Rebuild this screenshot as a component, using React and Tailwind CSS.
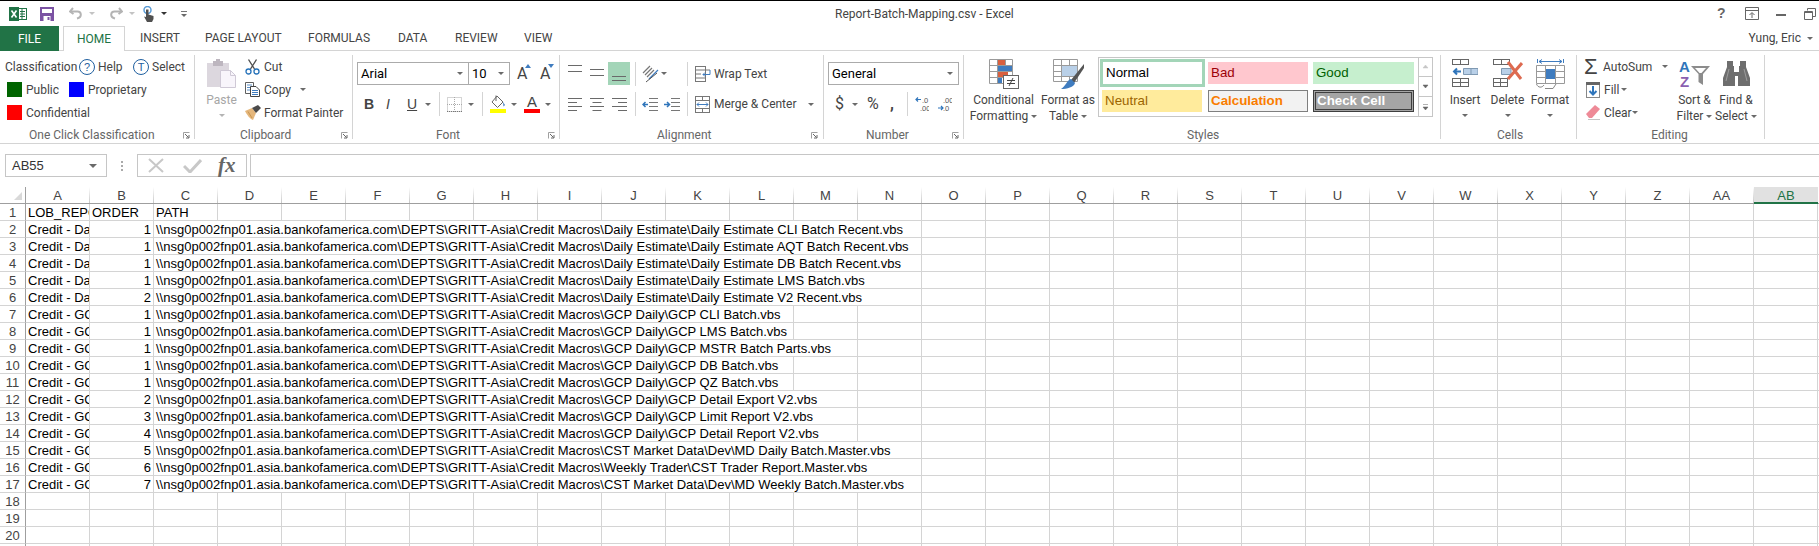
import React from 'react';

const UI = "font-['Roboto','Liberation_Sans',sans-serif]";
const ARIAL = "font-['Liberation_Sans',Arial,sans-serif]";

const COLS = 'A B C D E F G H I J K L M N O P Q R S T U V W X Y Z AA AB'.split(' ');
const BASE = '\\\\nsg0p002fnp01.asia.bankofamerica.com\\DEPTS\\GRITT-Asia\\Credit Macros\\';
const EST = 'Daily Estimate\\Daily Estimate ';
const GCP = 'GCP Daily\\GCP ';

// span = how many columns the path text runs over (gridlines are hidden below it)
const ROWS = [
  { a: 'Credit - Daily', o: 1, p: EST + 'CLI Batch Recent.vbs', span: 12 },
  { a: 'Credit - Daily', o: 1, p: EST + 'AQT Batch Recent.vbs', span: 12 },
  { a: 'Credit - Daily', o: 1, p: EST + 'DB Batch Recent.vbs', span: 12 },
  { a: 'Credit - Daily', o: 1, p: EST + 'LMS Batch.vbs', span: 12 },
  { a: 'Credit - Daily', o: 2, p: EST + 'V2 Recent.vbs', span: 12 },
  { a: 'Credit - GCP', o: 1, p: GCP + 'CLI Batch.vbs', span: 10 },
  { a: 'Credit - GCP', o: 1, p: GCP + 'LMS Batch.vbs', span: 10 },
  { a: 'Credit - GCP', o: 1, p: GCP + 'MSTR Batch Parts.vbs', span: 11 },
  { a: 'Credit - GCP', o: 1, p: GCP + 'DB Batch.vbs', span: 10 },
  { a: 'Credit - GCP', o: 1, p: GCP + 'QZ Batch.vbs', span: 10 },
  { a: 'Credit - GCP', o: 2, p: GCP + 'Detail Export V2.vbs', span: 11 },
  { a: 'Credit - GCP', o: 3, p: GCP + 'Limit Report V2.vbs', span: 11 },
  { a: 'Credit - GCP', o: 4, p: GCP + 'Detail Report V2.vbs', span: 11 },
  { a: 'Credit - GCP', o: 5, p: 'CST Market Data\\Dev\\MD Daily Batch.Master.vbs', span: 12 },
  { a: 'Credit - GCP', o: 6, p: 'Weekly Trader\\CST Trader Report.Master.vbs', span: 12 },
  { a: 'Credit - GCP', o: 7, p: 'CST Market Data\\Dev\\MD Weekly Batch.Master.vbs', span: 12 },
];

const SPAN_W = { 1: 'w-[64px]', 10: 'w-[640px]', 11: 'w-[704px]', 12: 'w-[768px]' };

const Caret = ({ className = '' }) => (
  <span className={`block w-0 h-0 shrink-0 border-x-[3px] border-t-[3px] border-x-transparent border-t-[#6a6a6a] ${className}`} />
);

const Launcher = ({ className = '' }) => (
  <svg width="7" height="7" viewBox="0 0 7 7" className={`shrink-0 mt-[3px] ${className}`}>
    <path d="M0.5 6.5V0.5H6.5" fill="none" stroke="#a0a0a0" />
    <path d="M2 2L5.5 5.5M6 3V6H3" fill="none" stroke="#666" />
  </svg>
);

const Sep = ({ className = '' }) => <span className={`block w-px h-[24px] bg-[#d4d4d4] shrink-0 ${className}`} />;

function Group({ width, children, label, labelClass, launcherClass }) {
  return (
    <div className={`${width} h-[84px] border-r border-[#d4d4d4] shrink-0 flex flex-col`}>
      <div className="h-[74px]">{children}</div>
      <div className="h-[10px] flex items-start text-[12px] leading-[12px] text-[#666] whitespace-nowrap">
        <span className={`${labelClass} text-center shrink-0`}>{label}</span>
        {launcherClass && <Launcher className={launcherClass} />}
      </div>
    </div>
  );
}

const Line = ({ children, className = '' }) => (
  <div className={`flex items-center h-[23px] whitespace-nowrap ${className}`}>{children}</div>
);

function BigButton({ width, icon, lines, caretInline, className = '' }) {
  return (
    <div className={`${width} ${className} shrink-0 flex flex-col items-center pt-[4px] leading-[16px] whitespace-nowrap`}>
      <div className="h-[30px] flex items-start justify-center">{icon}</div>
      <div className="mt-[3px] h-[16px]">{lines[0]}</div>
      {caretInline ? (
        <div className="h-[16px] flex items-center gap-[3px]">{lines[1]}<Caret /></div>
      ) : (
        <Caret className="mt-[6px]" />
      )}
    </div>
  );
}

/* ---------- quick access icons ---------- */
const ExcelLogo = () => (
  <svg width="18" height="14" viewBox="0 0 18 14" className="shrink-0">
    <rect x="7.5" y="1.5" width="10" height="11" fill="#fff" stroke="#217346" />
    <path d="M11 4.5h5M11 7h5M11 9.500h5M13 2v10" stroke="#217346" />
    <rect x="0" y="0" width="10" height="14" fill="#217346" />
    <path d="M2.500 3.500L7.500 10.500M7.500 3.500L2.500 10.500" stroke="#fff" strokeWidth="1.600" />
  </svg>
);
const SaveIcon = () => (
  <svg width="14" height="14" viewBox="0 0 14 14" className="shrink-0">
    <rect width="14" height="14" fill="#7b52a3" />
    <rect x="2" y="2" width="10" height="4" fill="#fff" />
    <rect x="3.500" y="9" width="7" height="5" fill="#fff" />
    <rect x="7.500" y="10" width="2" height="3" fill="#7b52a3" />
  </svg>
);
const UndoIcon = ({ flip }) => (
  <svg width="14" height="13" viewBox="0 0 14 13" className={`shrink-0 ${flip ? '-scale-x-100' : ''}`}>
    <path d="M4 1L1 4.500L4.500 7" fill="none" stroke="#b4b4b4" strokeWidth="2" />
    <path d="M2 4.500H8.500C12.500 4.500 13.500 10 8 11.500" fill="none" stroke="#b4b4b4" strokeWidth="2" />
  </svg>
);
const TouchIcon = () => (
  <svg width="12" height="16" viewBox="0 0 12 16" className="shrink-0">
    <circle cx="4.500" cy="4" r="3.500" fill="none" stroke="#5a9bd5" strokeWidth="1.500" />
    <path d="M3 3.500h2.500v5l5 1.500V13l-1.500 3H4L1 10.500l2 .5z" fill="#505050" />
  </svg>
);
const Customize = () => (
  <span className="flex flex-col items-center gap-[2px] shrink-0">
    <span className="block w-[6px] h-px bg-[#777]" />
    <Caret />
  </span>
);

/* ---------- classification ---------- */
const Circled = ({ children }) => (
  <span className={`w-[16px] h-[16px] rounded-full border border-[#1f5f9f] text-[#1f5f9f] text-[11px] leading-[14px] text-center shrink-0 ${ARIAL}`}>
    {children}
  </span>
);

/* ---------- clipboard ---------- */
const PasteIcon = () => (
  <svg width="29" height="29" viewBox="0 0 29 29">
    <rect x="0" y="4" width="22" height="24" fill="#dcd7de" />
    <rect x="6" y="2" width="10" height="5" fill="#bdb6bf" />
    <rect x="9" y="0" width="4" height="4" fill="#bdb6bf" />
    <path d="M13.500 11.500H23.500L28.500 16.500V28.500H13.500Z" fill="#f8f5fb" stroke="#cfc9d6" />
    <path d="M23.500 11.500V16.500H28.500" fill="none" stroke="#cfc9d6" />
  </svg>
);
const CutIcon = () => (
  <svg width="15" height="16" viewBox="0 0 15 16" className="shrink-0">
    <path d="M3.500 0.500L9.500 10M11.500 0.500L5.500 10" stroke="#4f4f4f" strokeWidth="1.400" fill="none" />
    <circle cx="3.500" cy="12.500" r="2.500" fill="none" stroke="#2672b9" strokeWidth="1.300" />
    <circle cx="11.500" cy="12.500" r="2.500" fill="none" stroke="#2672b9" strokeWidth="1.300" />
  </svg>
);
const CopyIcon = () => (
  <svg width="15" height="15" viewBox="0 0 15 15" className="shrink-0">
    <path d="M0.500 0.500H8.500V11.500H0.500Z" fill="#fff" stroke="#5f5f5f" />
    <path d="M2 3h5M2 5.500h5M2 8h3" stroke="#5b8fc7" />
    <path d="M5.500 4.500H11L14.500 8V14.500H5.500Z" fill="#fff" stroke="#444" />
    <path d="M7 8.500h6M7 10.500h6M7 12.500h6" stroke="#3f7cbf" />
  </svg>
);
const PainterIcon = () => (
  <svg width="16" height="15" viewBox="0 0 16 15" className="shrink-0">
    <path d="M0 6L7 3L11 8L8 15C5 14 2 10 0 6Z" fill="#e5b77c" />
    <path d="M7 3L11 8L16 3L13 0Z" fill="#4a4a4a" />
    <path d="M3 6.500L7 13" stroke="#c89550" />
  </svg>
);

/* ---------- font ---------- */
const Combo = ({ width, text, className = '' }) => (
  <div className={`${width} ${className} h-[23px] border border-[#ababab] bg-white flex items-center justify-between pl-[3px] pr-[5px] text-[13px] text-black shrink-0`}>
    <span>{text}</span>
    <Caret />
  </div>
);
const GrowFont = ({ up, className = '' }) => (
  <span className={`relative w-[13px] h-[23px] flex items-center text-[16px] text-[#444] shrink-0 ${className}`}>
    A
    <svg width="6" height="4" viewBox="0 0 6 4" className="absolute -right-[1px] top-[2px]">
      <path d={up ? 'M0 4L3 0L6 4Z' : 'M0 0L6 0L3 4Z'} fill="#3f7cbf" />
    </svg>
  </span>
);
const BordersIcon = () => (
  <svg width="15" height="15" viewBox="0 0 15 15" className="shrink-0">
    <rect x="0.500" y="0.500" width="14" height="14" fill="none" stroke="#aaa" strokeDasharray="1 1" />
    <path d="M7.500 0v15M0 7.500h15" stroke="#aaa" strokeDasharray="1 1" />
    <path d="M0 14.500h15" stroke="#777" strokeDasharray="1 1" />
  </svg>
);
const FillIcon = () => (
  <svg width="16" height="18" viewBox="0 0 16 18" className="shrink-0">
    <path d="M7 1L13 7L7.500 12.500L2 7Z" fill="#fff" stroke="#666" />
    <path d="M6 0.500V6" stroke="#666" />
    <path d="M13 7L15 10L13.500 11.500Z" fill="#3f7cbf" />
    <rect x="0" y="14" width="16" height="4" fill="#ffff00" />
  </svg>
);
const FontColor = () => (
  <span className={`w-[16px] h-[18px] flex flex-col items-center shrink-0 ${ARIAL}`}>
    <span className="text-[15px] leading-[14px] text-[#444]">A</span>
    <span className="block w-[16px] h-[4px] bg-[#ff0000]" />
  </span>
);

/* ---------- alignment ---------- */
const Lines = ({ width = 14, height = 23, d, color = '#6a6a6a', className = '' }) => (
  <svg width={width} height={height} viewBox={`0 0 ${width} ${height}`} className={`shrink-0 ${className}`}>
    <path d={d} stroke={color} fill="none" />
  </svg>
);
const OrientIcon = () => (
  <svg width="18" height="18" viewBox="0 0 18 18" className="shrink-0">
    <path d="M1 8L8 1M3 10L10 3M5 12L12 5" stroke="#777" strokeWidth="1.200" />
    <path d="M7 14L16 5" stroke="#3f7cbf" strokeWidth="1.200" />
    <path d="M4 17L15 8" stroke="#555" />
  </svg>
);
const WrapIcon = () => (
  <svg width="16" height="16" viewBox="0 0 16 16" className="shrink-0">
    <rect x="0.500" y="0.500" width="10" height="15" fill="none" stroke="#777" />
    <path d="M1 4h14M1 8h5M1 12h9" stroke="#777" />
    <path d="M15 4v4.500H8M10 6.500L8 8.500L10 10.500" stroke="#3f7cbf" fill="none" />
  </svg>
);
const MergeIcon = () => (
  <svg width="15" height="17" viewBox="0 0 15 17" className="shrink-0">
    <rect x="0.500" y="0.500" width="14" height="16" fill="#fff" stroke="#777" />
    <path d="M0 4.500h15M0 12.500h15M7.500 0v4M7.500 13v4" stroke="#777" />
    <path d="M2 8.500h11M4 6.500L2 8.500L4 10.500M11 6.500L13 8.500L11 10.500" stroke="#3f7cbf" fill="none" />
  </svg>
);
const IndentIcon = ({ inc }) => (
  <svg width="16" height="13" viewBox="0 0 16 13" className="shrink-0">
    <path d="M7 0.500h9M7 4.500h9M7 8.500h9M7 12.500h9" stroke="#777" />
    <path d={inc ? 'M0 6.500H5M3 4L5.500 6.500L3 9' : 'M6 6.500H1M3.500 4L1 6.500L3.500 9'} stroke="#2f75bb" strokeWidth="1.500" fill="none" />
  </svg>
);
const DecimalIcon = ({ inc }) => (
  <svg width="14" height="16" viewBox="0 0 14 16" className={`shrink-0 ${ARIAL}`}>
    <text x={inc ? 7 : 5} y="6.500" fontSize="7.500" fill="#555">{inc ? '.0' : '.00'}</text>
    <text x="5" y="15" fontSize="7.500" fill="#555">{inc ? '.00' : '.0'}</text>
    <path d={inc ? 'M6 3.500H1M3 1.500L1 3.500L3 5.500' : 'M0 12H5M3 10L5 12L3 14'} stroke="#2f75bb" strokeWidth="1.200" fill="none" />
  </svg>
);

/* ---------- styles ---------- */
const CondIcon = () => (
  <svg width="30" height="30" viewBox="0 0 30 30">
    <path d="M0.500 0.500H23.500V24.500H0.500ZM0.500 6.500H23.500M0.500 12.500H23.500M0.500 18.500H23.500M8.500 0.500V24.500M16.500 0.500V24.500" fill="#fff" stroke="#9a9a9a" />
    <rect x="9" y="1" width="7" height="5" fill="#d9603f" />
    <rect x="9" y="7" width="14" height="5" fill="#3f7cbf" />
    <rect x="9" y="13" width="10" height="5" fill="#d9603f" />
    <rect x="9" y="19" width="4" height="5" fill="#3f7cbf" />
    <rect x="14.500" y="16.500" width="15" height="13" fill="#fff" stroke="#666" />
    <path d="M18 21.500h8M18 24.500h8M24 19L20 27" stroke="#444" />
  </svg>
);
const TableIcon = () => (
  <svg width="31" height="30" viewBox="0 0 31 30">
    <path d="M0.500 0.500H24.500V22.500H0.500ZM0.500 6.500H24.500M0.500 12.500H24.500M0.500 17.500H24.500M8.500 0.500V22.500M16.500 0.500V22.500" fill="#fff" stroke="#9a9a9a" />
    <rect x="9" y="7" width="15" height="10" fill="#b9d0e8" />
    <path d="M31 5L18 21L21 24L31 9Z" fill="#555" />
    <path d="M18 20C14 21 13 27 8 30C14 30 21 28 22 24Z" fill="#3f7cbf" />
  </svg>
);
const Scroll = ({ d, color, last }) => (
  <div className={`h-[20px] flex items-center justify-center ${last ? '' : 'border-b border-[#c6c6c6]'}`}>
    <svg width="7" height="9" viewBox="0 0 7 9"><path d={d} fill={color} stroke={color} strokeWidth="0.500" /></svg>
  </div>
);

/* ---------- cells ---------- */
const Grid3 = ({ x, y, w = 11, h = 8 }) => (
  <g fill="#fff" stroke="#666">
    <rect x={x + 0.5} y={y + 0.5} width={w} height={h} />
    <path d={`M${x + 0.5 + w / 2} ${y}v${h + 1}`} />
  </g>
);
const InsertIcon = () => (
  <svg width="26" height="28" viewBox="0 0 26 28">
    <Grid3 x={0} y={0} w={16} h={5} />
    <path d="M11.500 9.500H26V15.500H11.500Z" fill="#b9d0e8" stroke="#7f99b2" />
    <path d="M19 9v7" stroke="#7f99b2" />
    <path d="M9 12.500H2M5 9.500L2 12.500L5 15.500" stroke="#2f75bb" strokeWidth="2" fill="none" />
    <rect x="0.500" y="19.500" width="16" height="8" fill="#fff" stroke="#666" />
    <path d="M8.500 19v9M0 23.500h17" stroke="#666" />
  </svg>
);
const DeleteIcon = () => (
  <svg width="30" height="28" viewBox="0 0 30 28">
    <Grid3 x={0} y={0} w={16} h={5} />
    <path d="M8.500 9.500H18V15.500H8.500Z" fill="#b9d0e8" stroke="#7f99b2" />
    <rect x="0.500" y="19.500" width="14" height="8" fill="#fff" stroke="#666" />
    <path d="M7.500 19v9M0 23.500h15" stroke="#666" />
    <path d="M15 3L28 20M29 4L15 20" stroke="#dd6a50" strokeWidth="3" />
  </svg>
);
const FormatIcon = () => (
  <svg width="29" height="30" viewBox="0 0 29 30">
    <path d="M1.500 0v4M27.500 0v4M3 2.500H26M6 0.500L3 2.500L6 4.500M23 0.500L26 2.500L23 4.500" stroke="#3f7cbf" fill="none" />
    <path d="M0.500 6.500H28.500V24.500H0.500ZM0.500 12.500H28.500M0.500 18.500H28.500M9.500 6.500V24.500M19.500 6.500V24.500" fill="#fff" stroke="#999" />
    <rect x="10" y="10" width="9" height="10" fill="#3f7cbf" />
    <path d="M0.500 25C2 29 6 29 8 26M9 29.500H17L20 25" fill="none" stroke="#888" />
  </svg>
);

/* ---------- editing ---------- */
const FillDown = () => (
  <svg width="14" height="16" viewBox="0 0 14 16" className="shrink-0">
    <rect x="0.500" y="0.500" width="13" height="15" fill="#fff" stroke="#888" />
    <rect x="0" y="0" width="14" height="3" fill="#666" />
    <path d="M7 4V12M3.500 9L7 12.500L10.500 9" stroke="#2f75bb" strokeWidth="2" fill="none" />
  </svg>
);
const ClearIcon = () => (
  <svg width="14" height="15" viewBox="0 0 14 15" className="shrink-0">
    <path d="M0 9L9 0L14 4L6 13H3Z" fill="#ee8a97" />
    <path d="M2 15H14" stroke="#888" />
  </svg>
);
const SortIcon = () => (
  <svg width="31" height="30" viewBox="0 0 31 30" className={ARIAL}>
    <text x="0" y="13" fontSize="15" fontWeight="700" fill="#2f75bb">A</text>
    <text x="1" y="28" fontSize="15" fontWeight="700" fill="#8a5fb0">Z</text>
    <path d="M12 7H31L24 15V26L19.500 23V15Z" fill="#8c8c8c" />
    <path d="M16 9H27L22.500 14H20.500Z" fill="#fff" />
  </svg>
);
const FindIcon = () => (
  <svg width="27" height="30" viewBox="0 0 27 30">
    <path d="M4 2H10V7H11V13H16V7H17V2H23V8L27 19V27H15V17H12V27H0V19L4 8Z" fill="#6e6e6e" />
    <path d="M6 10L3 22M21 10L24 22" stroke="#9c9c9c" />
  </svg>
);

function Ribbon() {
  return (
    <div className={`flex h-[93px] pt-[4px] border-b border-[#d4d4d4] text-[12px] text-[#444] ${UI}`}>
      <Group width="w-[195px]" label="One Click Classification" labelClass="ml-[29px] w-[120px]" launcherClass="ml-[34px]">
        <Line>
          <span className="ml-[5px] w-[74px]">Classification</span>
          <Circled>?</Circled>
          <span className="ml-[3px] w-[35px]">Help</span>
          <Circled>T</Circled>
          <span className="ml-[3px]">Select</span>
        </Line>
        <Line>
          <span className="ml-[7px] w-[15px] h-[15px] bg-[#006400] shrink-0" />
          <span className="ml-[4px] w-[43px]">Public</span>
          <span className="w-[15px] h-[15px] bg-[#0000ff] shrink-0" />
          <span className="ml-[4px]">Proprietary</span>
        </Line>
        <Line>
          <span className="ml-[7px] w-[15px] h-[15px] bg-[#ff0000] shrink-0" />
          <span className="ml-[4px]">Confidential</span>
        </Line>
      </Group>

      <Group width="w-[158px]" label="Clipboard" labelClass="ml-[45px] w-[50px]" launcherClass="ml-[51px]">
        <div className="flex">
          <div className="ml-[12px] w-[29px] flex flex-col items-center pt-[4px] text-[#a6a6a6] leading-[16px]">
            <PasteIcon />
            <span className="mt-[4px]">Paste</span>
            <Caret className="mt-[6px] opacity-50" />
          </div>
          <div className="ml-[9px]">
            <Line><CutIcon /><span className="ml-[4px]">Cut</span></Line>
            <Line><CopyIcon /><span className="ml-[4px] w-[36px]">Copy</span><Caret /></Line>
            <Line><PainterIcon /><span className="ml-[3px]">Format Painter</span></Line>
          </div>
        </div>
      </Group>

      <Group width="w-[207px]" label="Font" labelClass="ml-[83px] w-[24px]" launcherClass="ml-[88px]">
        <div className="pt-[7px] flex items-center">
          <Combo width="w-[112px]" text="Arial" className="ml-[4px]" />
          <Combo width="w-[42px]" text="10" className="-ml-px" />
          <GrowFont up className="ml-[7px]" />
          <GrowFont className="ml-[10px]" />
        </div>
        <div className={`mt-[7px] h-[24px] flex items-center text-[14px] ${ARIAL}`}>
          <span className="ml-[11px] w-[8px] font-bold">B</span>
          <span className="ml-[14px] w-[6px] italic">I</span>
          <span className="ml-[15px] w-[9px] underline">U</span>
          <Caret className="ml-[9px]" />
          <Sep className="ml-[8px]" />
          <span className="ml-[7px]"><BordersIcon /></span>
          <Caret className="ml-[6px]" />
          <Sep className="ml-[8px]" />
          <span className="ml-[7px]"><FillIcon /></span>
          <Caret className="ml-[5px]" />
          <span className="ml-[7px]"><FontColor /></span>
          <Caret className="ml-[5px]" />
        </div>
      </Group>

      <Group width="w-[264px]" label="Alignment" labelClass="ml-[97px] w-[53px]" launcherClass="ml-[101px]">
        <div className="pt-[7px] flex items-center h-[30px]">
          <Lines className="ml-[8px]" d="M0 3.500h14M0 9.500h14" />
          <Lines className="ml-[8px]" d="M0 7.500h14M0 13.500h14" />
          <span className="ml-[4px] w-[22px] h-[23px] bg-[#a3d5b8] flex justify-center">
            <Lines d="M0 14.500h14M0 18.500h14" />
          </span>
          <Sep className="ml-[5px]" />
          <span className="ml-[6px]"><OrientIcon /></span>
          <Caret className="ml-[1px]" />
          <Sep className="ml-[20px]" />
          <span className="ml-[7px]"><WrapIcon /></span>
          <span className="ml-[3px] whitespace-nowrap">Wrap Text</span>
        </div>
        <div className="mt-[7px] h-[24px] flex items-center">
          <Lines className="ml-[8px]" height={13} d="M0 0.500h14M0 4.500h9M0 8.500h14M0 12.500h9" />
          <Lines className="ml-[8px]" height={13} d="M0 0.500h14M2.500 4.500h9M0 8.500h14M2.500 12.500h9" />
          <Lines className="ml-[8px]" width={15} height={13} d="M0 0.500h15M6 4.500h9M0 8.500h15M6 12.500h9" />
          <Sep className="ml-[8px]" />
          <span className="ml-[6px]"><IndentIcon /></span>
          <span className="ml-[6px]"><IndentIcon inc /></span>
          <Sep className="ml-[7px]" />
          <span className="ml-[7px]"><MergeIcon /></span>
          <span className="ml-[4px] w-[86px] whitespace-nowrap">Merge &amp; Center</span>
          <Caret className="ml-[8px]" />
        </div>
      </Group>

      <Group width="w-[140px]" label="Number" labelClass="ml-[42px] w-[40px]" launcherClass="ml-[46px]">
        <div className="pt-[7px]"><Combo width="w-[131px]" text="General" className="ml-[4px]" /></div>
        <div className="mt-[7px] h-[24px] flex items-center text-[16px]">
          <span className="ml-[11px] w-[8px]">$</span>
          <Caret className="ml-[9px]" />
          <span className="ml-[9px] w-[13px]">%</span>
          <span className="ml-[10px] w-[6px] font-bold">,</span>
          <Sep className="ml-[11px]" />
          <span className="ml-[7px]"><DecimalIcon inc /></span>
          <span className="ml-[9px]"><DecimalIcon /></span>
        </div>
      </Group>

      <Group width="w-[477px]" label="Styles" labelClass="ml-[223px] w-[29px]">
        <div className="flex">
          <BigButton width="w-[67px]" className="ml-[6px]" icon={<CondIcon />} lines={['Conditional', 'Formatting']} caretInline />
          <BigButton width="w-[54px]" className="ml-[4px]" icon={<TableIcon />} lines={['Format as', 'Table']} caretInline />
          <div className="ml-[3px] mt-[2px] w-[335px] h-[60px] border border-[#c6c6c6] flex shrink-0">
            <div className={`w-[319px] grid grid-cols-[109px_105px_105px] grid-rows-[30px_26px] items-center text-[13.33px] ${ARIAL}`}>
              <div className="ml-[1px] w-[105px] h-[28px] border-[3px] border-[#a3d5b8] text-black leading-[22px] pl-[3px]">Normal</div>
              <div className="w-[100px] h-[22px] bg-[#ffc7ce] text-[#9c0006] leading-[22px] pl-[3px]">Bad</div>
              <div className="w-[101px] h-[22px] bg-[#c6efce] text-[#006100] leading-[22px] pl-[3px]">Good</div>
              <div className="ml-[3px] w-[100px] h-[22px] bg-[#ffeb9c] text-[#9c6500] leading-[22px] pl-[3px]">Neutral</div>
              <div className="w-[100px] h-[22px] bg-[#f2f2f2] border border-[#7f7f7f] text-[#fa7d00] font-bold leading-[20px] pl-[2px]">Calculation</div>
              <div className="w-[101px] h-[22px] bg-[#a5a5a5] border-[3px] border-double border-[#3f3f3f] text-white font-bold leading-[16px] pl-[1px]">Check Cell</div>
            </div>
            <div className="w-[15px] border-l border-[#c6c6c6] -mt-px">
              <Scroll d="M1 6L3.500 3L6 6Z" color="#c6c6c6" />
              <Scroll d="M1 3L6 3L3.500 6Z" color="#666" />
              <Scroll d="M1 1.500H6M1 4L6 4L3.500 7Z" color="#666" last />
            </div>
          </div>
        </div>
      </Group>

      <Group width="w-[136px]" label="Cells" labelClass="ml-[56px] w-[23px]">
        <div className="flex">
          <BigButton width="w-[36px]" className="ml-[6px]" icon={<InsertIcon />} lines={['Insert']} />
          <BigButton width="w-[35px]" className="ml-[7px]" icon={<DeleteIcon />} lines={['Delete']} />
          <BigButton width="w-[38px]" className="ml-[6px]" icon={<FormatIcon />} lines={['Format']} />
        </div>
      </Group>

      <Group width="w-[188px]" label="Editing" labelClass="ml-[74px] w-[37px]">
        <div className="flex">
          <div className="ml-[7px] w-[93px] shrink-0">
            <Line>
              <span className={`w-[16px] text-[22px] leading-[22px] text-[#444] ${ARIAL}`}>Σ</span>
              <span className="ml-[3px] w-[50px]">AutoSum</span>
              <Caret className="ml-[9px]" />
            </Line>
            <Line><span className="ml-[2px]"><FillDown /></span><span className="ml-[4px] w-[17px]">Fill</span><Caret /></Line>
            <Line><span className="ml-[2px]"><ClearIcon /></span><span className="ml-[4px] w-[28px]">Clear</span><Caret /></Line>
          </div>
          <BigButton width="w-[35px]" icon={<SortIcon />} lines={['Sort &', 'Filter']} caretInline />
          <BigButton width="w-[38px]" className="ml-[5px]" icon={<FindIcon />} lines={['Find &', 'Select']} caretInline />
        </div>
      </Group>
    </div>
  );
}

function TitleBar() {
  return (
    <div className={`h-[26px] border-t border-black flex items-center text-[12px] text-[#444] ${UI}`}>
      <span className="ml-[9px]"><ExcelLogo /></span>
      <span className="ml-[13px]"><SaveIcon /></span>
      <span className="ml-[15px]"><UndoIcon /></span>
      <Caret className="ml-[6px] opacity-40" />
      <span className="ml-[14px]"><UndoIcon flip /></span>
      <Caret className="ml-[6px] opacity-40" />
      <span className="ml-[8px]"><TouchIcon /></span>
      <Caret className="ml-[6px] border-t-[#333]" />
      <span className="ml-[14px]"><Customize /></span>
      <span className="ml-[648px] w-[180px] whitespace-nowrap">Report-Batch-Mapping.csv - Excel</span>
      <span className={`ml-[702px] text-[14px] font-bold text-[#666] ${ARIAL}`}>?</span>
      <svg width="14" height="13" viewBox="0 0 14 13" className="ml-[19px] shrink-0">
        <path d="M0.500 0.500H13.500V12.500H0.500ZM0.500 3.500H13.500M7 11V6M4.500 8L7 5.500L9.500 8" fill="none" stroke="#666" />
      </svg>
      <span className="ml-[17px] w-[10px] h-[2px] bg-[#666] mt-[3px] shrink-0" />
      <svg width="12" height="12" viewBox="0 0 12 12" className="ml-[18px] shrink-0">
        <path d="M3.500 2.500V0.500H11.500V8.500H9M0.500 3.500H8.500V11.500H0.500ZM0.500 4.500H8.500" fill="none" stroke="#666" />
      </svg>
    </div>
  );
}

function Tabs() {
  return (
    <div className={`h-[25px] border-b border-[#d4d4d4] flex text-[12px] text-[#444] whitespace-nowrap ${UI}`}>
      <div className="w-[59px] h-[25px] bg-[#217346] text-white flex items-center justify-center shrink-0">FILE</div>
      <div className="ml-[4px] w-[62px] h-[25px] bg-white border-x border-t border-[#d4d4d4] text-[#217346] flex items-center justify-center shrink-0">HOME</div>
      <span className="ml-[15px] w-[37px] leading-[24px]">INSERT</span>
      <span className="ml-[28px] w-[74px] leading-[24px]">PAGE LAYOUT</span>
      <span className="ml-[29px] w-[61px] leading-[24px]">FORMULAS</span>
      <span className="ml-[29px] w-[28px] leading-[24px]">DATA</span>
      <span className="ml-[29px] w-[39px] leading-[24px]">REVIEW</span>
      <span className="ml-[30px] w-[27px] leading-[24px]">VIEW</span>
      <span className="ml-auto mr-[6px] leading-[24px] flex items-center gap-[6px]">Yung, Eric <Caret /></span>
    </div>
  );
}

function FormulaBar() {
  return (
    <div className={`mt-[10px] h-[23px] flex items-stretch ${ARIAL}`}>
      <div className="ml-[5px] w-[102px] border border-[#c6c6c6] flex items-center justify-between pl-[6px] pr-[9px] text-[13px] text-[#333] shrink-0">
        AB55
        <Caret className="border-x-[4px] border-t-[4px]" />
      </div>
      <div className="ml-[14px] w-[2px] flex flex-col justify-center gap-[2px] shrink-0">
        <span className="block w-[2px] h-[2px] bg-[#aaa]" />
        <span className="block w-[2px] h-[2px] bg-[#aaa]" />
        <span className="block w-[2px] h-[2px] bg-[#aaa]" />
      </div>
      <div className="ml-[14px] w-[110px] border border-[#c6c6c6] flex items-center shrink-0">
        <svg width="18" height="15" viewBox="0 0 18 15" className="ml-[9px] shrink-0">
          <path d="M2 1L16 14M16 1L2 14" stroke="#c8c8c8" strokeWidth="2" />
        </svg>
        <svg width="19" height="15" viewBox="0 0 19 15" className="ml-[18px] shrink-0">
          <path d="M1 8L7 14L18 2" stroke="#c8c8c8" strokeWidth="3" fill="none" />
        </svg>
        <span className="ml-[16px] font-['Liberation_Serif',serif] italic font-bold text-[21px] leading-[21px] text-[#666]">fx</span>
      </div>
      <div className="ml-[3px] flex-1 border-y border-l border-[#c6c6c6]" />
    </div>
  );
}

function HeaderRow() {
  return (
    <div className={`mt-[10px] h-[17px] flex text-[13px] leading-[17px] text-[#444] ${ARIAL}`}>
      <div className="w-[26px] border-r border-b border-[#9f9f9f] flex items-end justify-end pr-[3px] pb-[3px] shrink-0">
        <svg width="8" height="8" viewBox="0 0 8 8"><path d="M8 0V8H0Z" fill="#d9d9d9" /></svg>
      </div>
      {COLS.map(c => c === 'AB' ? (
        <div key={c} className="w-[64px] h-[17px] bg-[#e1e1e1] border-b-2 border-[#217346] text-[#217346] text-center shrink-0">{c}</div>
      ) : (
        <div key={c} className="w-[64px] h-[17px] border-b border-[#9f9f9f] flex shrink-0">
          <span className="flex-1 text-center">{c}</span>
          <span className="block w-px h-[16px] bg-linear-to-b from-white to-[#c8c8c8]" />
        </div>
      ))}
      <div className="flex-1 border-b border-[#9f9f9f]" />
    </div>
  );
}

const RowHead = ({ n }) => (
  <div className={`w-[26px] h-[17px] border-r border-r-[#9f9f9f] border-b border-b-[#d4d4d4] text-center text-[13px] leading-[17px] text-[#444] shrink-0 ${ARIAL}`}>{n}</div>
);

const Cell = ({ className = '', children }) => (
  <div className={`h-[17px] border-r border-b border-[#d4d4d4] leading-[17px] overflow-hidden whitespace-nowrap shrink-0 ${className}`}>{children}</div>
);

function SheetRow({ n, a, o, p, span = 1 }) {
  const blanks = COLS.length - 2 - span;
  return (
    <div className={`flex text-[13px] text-black ${ARIAL}`}>
      <RowHead n={n} />
      <Cell className="w-[64px] px-[2px]">{a}</Cell>
      <Cell className={`w-[64px] px-[2px] ${typeof o === 'number' ? 'text-right' : ''}`}>{o}</Cell>
      <Cell className={`${SPAN_W[span]} px-[2px]`}>{p}</Cell>
      {Array.from({ length: blanks }, (_, i) => <Cell key={i} className="w-[64px]" />)}
      <div className="flex-1 border-b border-[#d4d4d4]" />
    </div>
  );
}

export default function App() {
  return (
    <div className="w-[1819px] h-[546px] overflow-hidden bg-white">
      <TitleBar />
      <Tabs />
      <Ribbon />
      <FormulaBar />
      <HeaderRow />
      <SheetRow n={1} a="LOB_REPORT" o="ORDER" p="PATH" />
      {ROWS.map((r, i) => <SheetRow key={i} n={i + 2} a={r.a} o={r.o} p={BASE + r.p} span={r.span} />)}
      {[18, 19, 20, 21].map(n => <SheetRow key={n} n={n} />)}
    </div>
  );
}
